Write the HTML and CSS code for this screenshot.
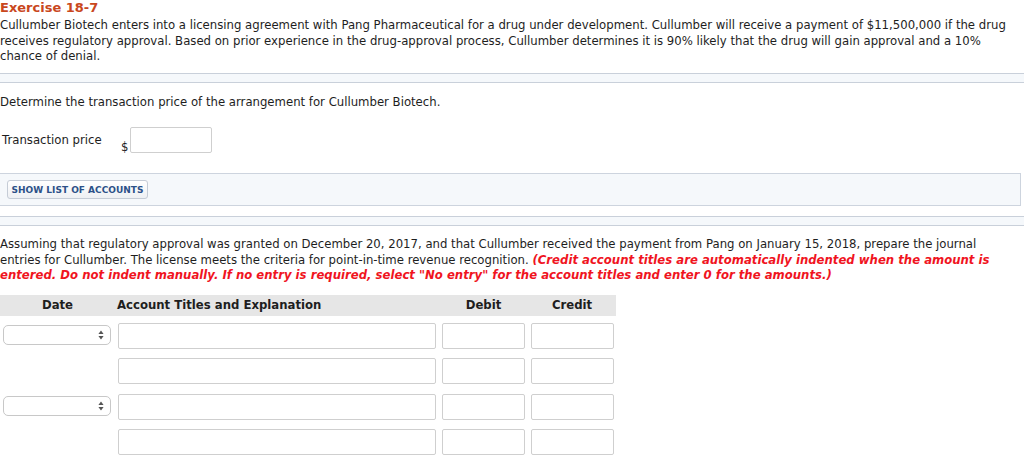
FILE: index.html
```html
<!DOCTYPE html>
<html>
<head>
<meta charset="utf-8">
<link rel="stylesheet" href="styles.css">
</head>
<body>
<div class="page">
  <h1 class="title">Exercise 18-7</h1>
  <p class="text intro">Cullumber Biotech enters into a licensing agreement with Pang Pharmaceutical for a drug under development. Cullumber will receive a payment of $11,500,000 if the drug receives regulatory approval. Based on prior experience in the drug-approval process, Cullumber determines it is 90% likely that the drug will gain approval and a 10% chance of denial.</p>
  <div class="band band-1"></div>
  <p class="text part-a">Determine the transaction price of the arrangement for Cullumber Biotech.</p>
  <div class="tp-row">
    <span class="tp-label">Transaction price</span>
    <span class="dollar">$</span>
    <span class="field tp-field"></span>
  </div>
  <div class="acct-panel">
    <button class="acct-btn">SHOW LIST OF ACCOUNTS</button>
  </div>
  <div class="band band-2"></div>
  <p class="text part-b">Assuming that regulatory approval was granted on December 20, 2017, and that Cullumber received the payment from Pang on January 15, 2018, prepare the journal entries for Cullumber. The license meets the criteria for point-in-time revenue recognition. <em class="warn">(Credit account titles are automatically indented when the amount is entered. Do not indent manually. If no entry is required, select "No entry" for the account titles and enter 0 for the amounts.)</em></p>
  <div class="journal">
    <div class="jh jh-date">Date</div>
    <div class="jh jh-acct">Account Titles and Explanation</div>
    <div class="jh jh-num">Debit</div>
    <div class="jh jh-num">Credit</div>

    <div class="jc"><span class="select"><svg width="6" height="10" viewBox="0 0 6 10"><path d="M3 0.5 L5.6 4 L0.4 4 Z M3 9.5 L5.6 6 L0.4 6 Z" fill="#555"/></svg></span></div>
    <div class="jc"><span class="field acct"></span></div>
    <div class="jc"><span class="field num"></span></div>
    <div class="jc"><span class="field num"></span></div>

    <div class="jc"></div>
    <div class="jc"><span class="field acct"></span></div>
    <div class="jc"><span class="field num"></span></div>
    <div class="jc"><span class="field num"></span></div>

    <div class="jc"><span class="select"><svg width="6" height="10" viewBox="0 0 6 10"><path d="M3 0.5 L5.6 4 L0.4 4 Z M3 9.5 L5.6 6 L0.4 6 Z" fill="#555"/></svg></span></div>
    <div class="jc"><span class="field acct"></span></div>
    <div class="jc"><span class="field num"></span></div>
    <div class="jc"><span class="field num"></span></div>

    <div class="jc"></div>
    <div class="jc"><span class="field acct"></span></div>
    <div class="jc"><span class="field num"></span></div>
    <div class="jc"><span class="field num"></span></div>
  </div>
</div>
</body>
</html>
```
FILE: styles.css
```css
html, body {
  margin: 0;
  padding: 0;
  background: #fff;
}
body {
  font-family: "DejaVu Sans", Verdana, sans-serif;
  font-size: 11.7px;
  color: #1e1e1e;
}
.page {
  width: 1024px;
}
.title {
  margin: 0;
  font-size: 13px;
  line-height: 15px;
  font-weight: bold;
  color: #c9471d;
}
.text {
  margin: 0;
  line-height: 15.5px;
}
.intro {
  margin-top: 3px;
  padding-right: 8px;
}
.band {
  height: 8px;
  background: #f5f8fb;
  border-top: 1px solid #c9d0da;
  border-bottom: 1px solid #c9d0da;
}
.band-1 {
  margin-top: 8px;
}
.part-a {
  margin-top: 12px;
}
.tp-row {
  display: flex;
  align-items: flex-start;
  margin-top: 17px;
  height: 26px;
}
.tp-label {
  margin-left: 2px;
  margin-top: 6px;
  width: 119px;
}
.dollar {
  margin-top: 13px;
  width: 9px;
}
.field {
  display: block;
  box-sizing: border-box;
  height: 26px;
  border: 1px solid #cfcfcf;
  border-radius: 2px;
  background: #fff;
}
.tp-field {
  width: 82px;
}
.acct-panel {
  margin-top: 20px;
  box-sizing: border-box;
  width: 1021px;
  height: 33px;
  padding: 6px 0 0 7px;
  background: #f5f8fb;
  border: 1px solid #cdd4de;
  border-left: none;
}
.acct-btn {
  display: block;
  box-sizing: border-box;
  width: 141px;
  height: 19px;
  padding: 0;
  font-family: "DejaVu Sans", Verdana, sans-serif;
  font-size: 9px;
  font-weight: bold;
  color: #2c5188;
  background: linear-gradient(#ffffff, #eef0f3);
  border: 1px solid #c5ccd6;
  border-radius: 3px;
}
.band-2 {
  margin-top: 10px;
}
.part-b {
  margin-top: 11px;
  padding-right: 24px;
}
.warn {
  color: #f0141e;
  font-weight: bold;
  font-style: italic;
}
.journal {
  margin-top: 11px;
  width: 616px;
  display: grid;
  grid-template-columns: 115px 324px 89px 88px;
  grid-template-rows: 28px 35.5px 35.5px 35.5px 35.5px;
}
.jh {
  height: 21px;
  line-height: 21px;
  background: #e6e6e6;
  font-weight: bold;
  color: #1e1e1e;
}
.jh-date, .jh-num {
  text-align: center;
}
.jh-acct {
  padding-left: 2px;
}
.jc {
  padding-left: 3px;
}
.acct {
  width: 318px;
}
.num {
  width: 83px;
}
.select {
  display: flex;
  align-items: center;
  justify-content: flex-end;
  box-sizing: border-box;
  width: 108px;
  height: 20px;
  margin-top: 2px;
  padding-right: 6px;
  border: 1px solid #c8c8c8;
  border-radius: 5px;
  background: #fff;
}
```
